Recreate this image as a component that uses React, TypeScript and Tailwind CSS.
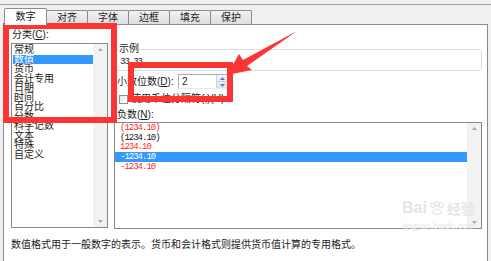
import React from 'react';

const cjk = "font-['Liberation_Sans','Noto_Sans_CJK_SC',sans-serif]";
const mono = "font-['Liberation_Mono','Noto_Sans_CJK_SC',monospace]";

const tabs = ['数字', '对齐', '字体', '边框', '填充', '保护'];
const categories = ['常规', '数值', '货币', '会计专用', '日期', '时间', '百分比', '分数', '科学记数', '文本', '特殊', '自定义'];
const negatives = [
  { text: '(1234.10)', color: 'text-[#ff2a2a]' },
  { text: '(1234.10)', color: 'text-[#1a1a1a]' },
  { text: '1234.10', color: 'text-[#ff2a2a]' },
  { text: '-1234.10', color: 'text-white', selected: true },
  { text: '-1234.10', color: 'text-[#ff2a2a]' },
];

function ScrollBar() {
  return (
    <div className="w-[14px] h-full bg-[#f2f2f2] flex flex-col justify-between items-center py-[4px]">
      <svg width="5" height="3" viewBox="0 0 5 3">
        <path d="M0 3 L2.5 0 L5 3 Z" fill="#a8a8a8" />
      </svg>
      <svg width="5" height="3" viewBox="0 0 5 3">
        <path d="M0 0 L2.5 3 L5 0 Z" fill="#a8a8a8" />
      </svg>
    </div>
  );
}

export default function App() {
  return (
    <div className={`relative w-[491px] h-[261px] overflow-hidden bg-[#f0f0f0] text-[10px] text-[#1a1a1a] ${cjk}`}>
      <div className="h-[4px]" />
      <div className="h-px bg-[#a3a3a3]" />
      <div className="h-[3px]" />

      {/* tabs */}
      <div className="flex items-end h-[16px] pl-[4px]">
        {tabs.map((t, i) =>
          i === 0 ? (
            <div
              key={t}
              className="relative z-10 w-[43px] h-[17px] -mb-px bg-white border border-b-0 border-[#898c95] rounded-t-[2px] flex items-center justify-center leading-none"
            >
              {t}
            </div>
          ) : (
            <div
              key={t}
              className="w-[42px] h-[14px] -ml-px bg-gradient-to-b from-[#f3f3f3] to-[#dddddd] border border-b-0 border-[#898c95] rounded-t-[2px] flex items-center justify-center leading-none"
            >
              {t}
            </div>
          )
        )}
      </div>

      {/* panel */}
      <div className="ml-[3px] w-[485px] h-[250px] bg-white border border-[#898c95] border-r-[#8a8a8a]">
        <div className="flex pl-[7px] pt-[3px]">
          {/* category column */}
          <div className="w-[97px] flex flex-col">
            <div className="h-[13px] leading-[13px] mb-[2px] pl-px">
              分类(<span className="underline">C</span>):
            </div>
            <div className="h-[185px] border border-[#828790] flex">
              <div className="w-[81px] pt-[1px]">
                {categories.map((c, i) => (
                  <div
                    key={c}
                    className={`h-[9.5px] leading-[9.5px] ml-px pl-px whitespace-nowrap ${
                      i === 1 ? 'bg-[#3399ff] text-white' : ''
                    }`}
                  >
                    {c}
                  </div>
                ))}
              </div>
              <ScrollBar />
            </div>
          </div>

          {/* right column */}
          <div className="ml-[6px] w-[368px] flex flex-col">
            <div className="relative mt-[21px] h-[22px] border border-[#d5dfe5] rounded-[3px]">
              <span className="absolute -top-[7px] left-[3px] bg-white px-px leading-[12px]">示例</span>
              <div className={`pl-[5px] pt-[7px] leading-[10px] text-[9px] tracking-[-1px] ${mono}`}>33.33</div>
            </div>

            <div className="mt-[3px] h-[15px] flex items-center">
              <span className="w-[64px] pl-[3px] leading-none whitespace-nowrap">
                小数位数(<span className="underline">D</span>):
              </span>
              <div className="w-[51px] h-[15px] border border-[#abadb3] border-b-[#e3e9ef] flex">
                <div className="flex-1 pl-[3px] leading-[13px] text-[10px] font-['Liberation_Sans',sans-serif]">2</div>
                <div className="w-[12px] flex flex-col border-l border-[#d4d4d4] bg-gradient-to-b from-[#f4f6fb] to-[#dde4ee]">
                  <div className="flex-1 flex items-center justify-center border-b border-[#c8cfd9]">
                    <svg width="5" height="3" viewBox="0 0 5 3">
                      <path d="M0 3 L2.5 0 L5 3 Z" fill="#5a7bb5" />
                    </svg>
                  </div>
                  <div className="flex-1 flex items-center justify-center">
                    <svg width="5" height="3" viewBox="0 0 5 3">
                      <path d="M0 0 L2.5 3 L5 0 Z" fill="#5a7bb5" />
                    </svg>
                  </div>
                </div>
              </div>
            </div>

            <div className="mt-[5px] h-[10px] flex items-center">
              <div className="ml-[5px] w-[9px] h-[9px] border border-[#8f8f8f] bg-gradient-to-br from-[#e6e6e6] to-white" />
              <span className="ml-[3px] leading-none">使用千位分隔符(,)(U)</span>
            </div>

            <div className="mt-[5px] h-[12px] leading-[12px] pl-[3px]">
              负数(<span className="underline">N</span>):
            </div>

            <div className="mt-px h-[107px] border border-[#828790] flex">
              <div className={`flex-1 text-[9px] tracking-[-1px] ${mono}`}>
                {negatives.map((n, i) => (
                  <div
                    key={i}
                    className={`h-[9.7px] flex items-center pl-[5px] ${n.color} ${n.selected ? 'bg-[#3399ff]' : ''}`}
                  >
                    <span className="leading-none pt-px">{n.text}</span>
                  </div>
                ))}
              </div>
              <ScrollBar />
            </div>
          </div>
        </div>

        <div className="mt-[11px] pl-[7px] leading-[10px] whitespace-nowrap">
          数值格式用于一般数字的表示。货币和会计格式则提供货币值计算的专用格式。
        </div>
      </div>

      {/* watermark */}
      <div className="absolute left-[402px] top-[200px] flex flex-col items-center text-[#e6e6e6] leading-none select-none">
        <div className="flex items-end gap-[2px]">
          <span className="text-[16px] font-bold font-['Liberation_Sans',sans-serif]">Bai</span>
          <svg width="16" height="15" viewBox="0 0 16 15">
            <g fill="none" stroke="#e4e4e4" strokeWidth="1.2">
              <ellipse cx="4" cy="4" rx="2" ry="2.5" />
              <ellipse cx="8" cy="2.8" rx="1.8" ry="2.3" />
              <ellipse cx="12" cy="4" rx="2" ry="2.5" />
              <path d="M3 12 Q8 4 13 12 Q8 15 3 12 Z" />
            </g>
          </svg>
          <span className="text-[14px] font-bold">经验</span>
        </div>
        <span className="mt-[6px] text-[9px] font-['Liberation_Sans',sans-serif]">jingyan.baidu.com</span>
      </div>

      {/* annotations */}
      <div className="absolute left-[3px] top-[23px] w-[114px] h-[100px] border-[6px] border-[#fb3434]" />
      <div className="absolute left-[128px] top-[62px] w-[105px] h-[40px] border-[6px] border-[#fb3434]" />
      <svg className="absolute left-0 top-0" width="491" height="261" viewBox="0 0 491 261">
        <polygon
          points="227,75 239,54 243,60 297,31 247,66 252,70"
          fill="#fb3434"
        />
      </svg>
    </div>
  );
}
